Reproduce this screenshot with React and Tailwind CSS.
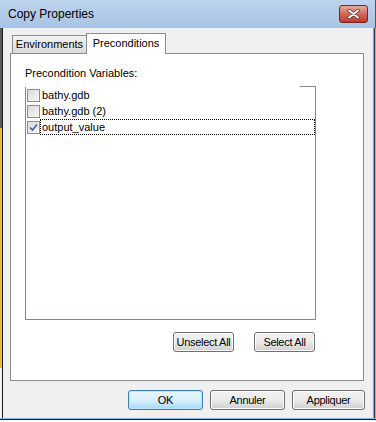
import { useState } from "react";

const font = { fontFamily: '"Liberation Sans", Arial, sans-serif' };

function CheckRow({ label, checked, focused }) {
  return (
    <div className="flex items-center h-[16px] pl-[1px]">
      <div className="w-[13px] h-[13px] border border-[#8f8f8f] bg-gradient-to-br from-[#dcdcdc] to-[#f6f6f6] flex items-center justify-center">
        {checked && (
          <svg width="9" height="9" viewBox="0 0 9 9">
            <path d="M1 4.5 L3.5 7 L8 1.5" fill="none" stroke="#4b61a0" strokeWidth="1.7" />
          </svg>
        )}
      </div>
      <div
        className={
          "h-[16px] flex items-center pl-[1px] text-[11px] text-black border border-dotted " +
          (focused ? "flex-1 border-black" : "border-transparent")
        }
      >
        {label}
      </div>
    </div>
  );
}

function WinButton({ children, className = "", primary }) {
  return (
    <button
      className={
        "h-[20px] rounded-[3px] border text-[11px] tracking-[-0.3px] text-black flex items-center justify-center whitespace-nowrap " +
        (primary
          ? "border-[#3c7fb1] bg-gradient-to-b from-[#eaf6fd] via-[#d9f0fc] to-[#a7d9f5] shadow-[inset_0_0_0_1px_#b9e4fb] "
          : "border-[#707070] bg-gradient-to-b from-[#f2f2f2] via-[#ebebeb] to-[#cfcfcf] shadow-[inset_0_0_0_1px_#fcfcfc] ") +
        className
      }
    >
      {children}
    </button>
  );
}

export default function App() {
  const [items] = useState([
    { label: "bathy.gdb", checked: false },
    { label: "bathy.gdb (2)", checked: false },
    { label: "output_value", checked: true, focused: true },
  ]);

  return (
    <div className="w-[376px] h-[422px] overflow-hidden flex flex-col bg-[#f0f0f0]" style={font}>
      {/* title bar */}
      <div className="h-[28px] flex items-center bg-gradient-to-b from-[#bdd4ee] to-[#a8c3e3] pl-[8px] pr-[7px] border-r border-[#4a5a6e]">
        <span className="text-[12px] text-black">Copy Properties</span>
        <div className="ml-auto w-[29px] h-[18px] rounded-[3px] border border-[#6d2a24] bg-gradient-to-b from-[#e9a99d] via-[#d0685c] to-[#c0392b] flex items-center justify-center">
          <svg width="13" height="10" viewBox="0 0 13 10">
            <path d="M2 1.5 L11 8.5 M11 1.5 L2 8.5" stroke="#50302c" strokeWidth="3.4" strokeLinecap="round" />
            <path d="M2 1.5 L11 8.5 M11 1.5 L2 8.5" stroke="#ffffff" strokeWidth="2" strokeLinecap="round" />
          </svg>
        </div>
      </div>

      <div className="flex-1 flex">
        <div className="w-[2px] flex flex-col">
          <div className="h-[100px] bg-[#5a5a5a]" />
          <div className="flex-1 bg-[#e9b83c]" />
          <div className="h-[50px] bg-[#f4f4f4]" />
        </div>
        <div className="w-[1px] bg-[#1a1a1a]" />
        <div className="flex-1 flex flex-col">
          {/* tabs */}
          <div className="flex items-end h-[25px] pl-[9px]">
            <div className="h-[18px] w-[75px] border border-b-0 border-[#898c95] bg-gradient-to-b from-[#f2f2f2] to-[#dadada] text-[11px] flex items-center justify-center">
              Environments
            </div>
            <div className="h-[21px] w-[80px] -ml-[1px] border border-b-0 border-[#898c95] bg-white text-[11px] flex items-center justify-center relative z-10 -mb-[1px] pb-[1px]">
              Preconditions
            </div>
          </div>

          {/* tab page */}
          <div className="ml-[7px] w-[354px] h-[328px] border border-[#898c95] bg-white flex flex-col px-[14px]">
            <div className="mt-[12px] text-[11px] leading-[14px] text-black">Precondition Variables:</div>
            <div className="mt-[7px] w-[291px] h-[233px] border-l border-r border-b border-[#828790] relative">
              <div className="absolute -top-[1px] right-[-1px] w-[16px] h-[1px] bg-[#828790]" />
              {items.map((it) => (
                <CheckRow key={it.label} {...it} />
              ))}
            </div>
            <div className="mt-[12px] flex justify-end gap-[20px] w-[290px]">
              <WinButton className="w-[61px]">Unselect All</WinButton>
              <WinButton className="w-[61px]">Select All</WinButton>
            </div>
          </div>

          {/* bottom buttons */}
          <div className="mt-[9px] flex gap-[7px] pl-[125px]">
            <WinButton primary className="w-[75px]">OK</WinButton>
            <WinButton className="w-[75px]">Annuler</WinButton>
            <WinButton className="w-[73px]">Appliquer</WinButton>
          </div>
        </div>
        <div className="w-[1px] bg-[#dfe9f3]" />
        <div className="w-[1px] bg-[#6fb3e6]" />
        <div className="w-[1px] bg-[#2d3f52]" />
        <div className="w-[1px] bg-[#d8a838]" />
      </div>
      <div className="h-[1px] bg-[#8fb8e0]" />
      <div className="h-[1px] bg-[#1a1a1a]" />
      <div className="h-[2px] bg-white" />
    </div>
  );
}
